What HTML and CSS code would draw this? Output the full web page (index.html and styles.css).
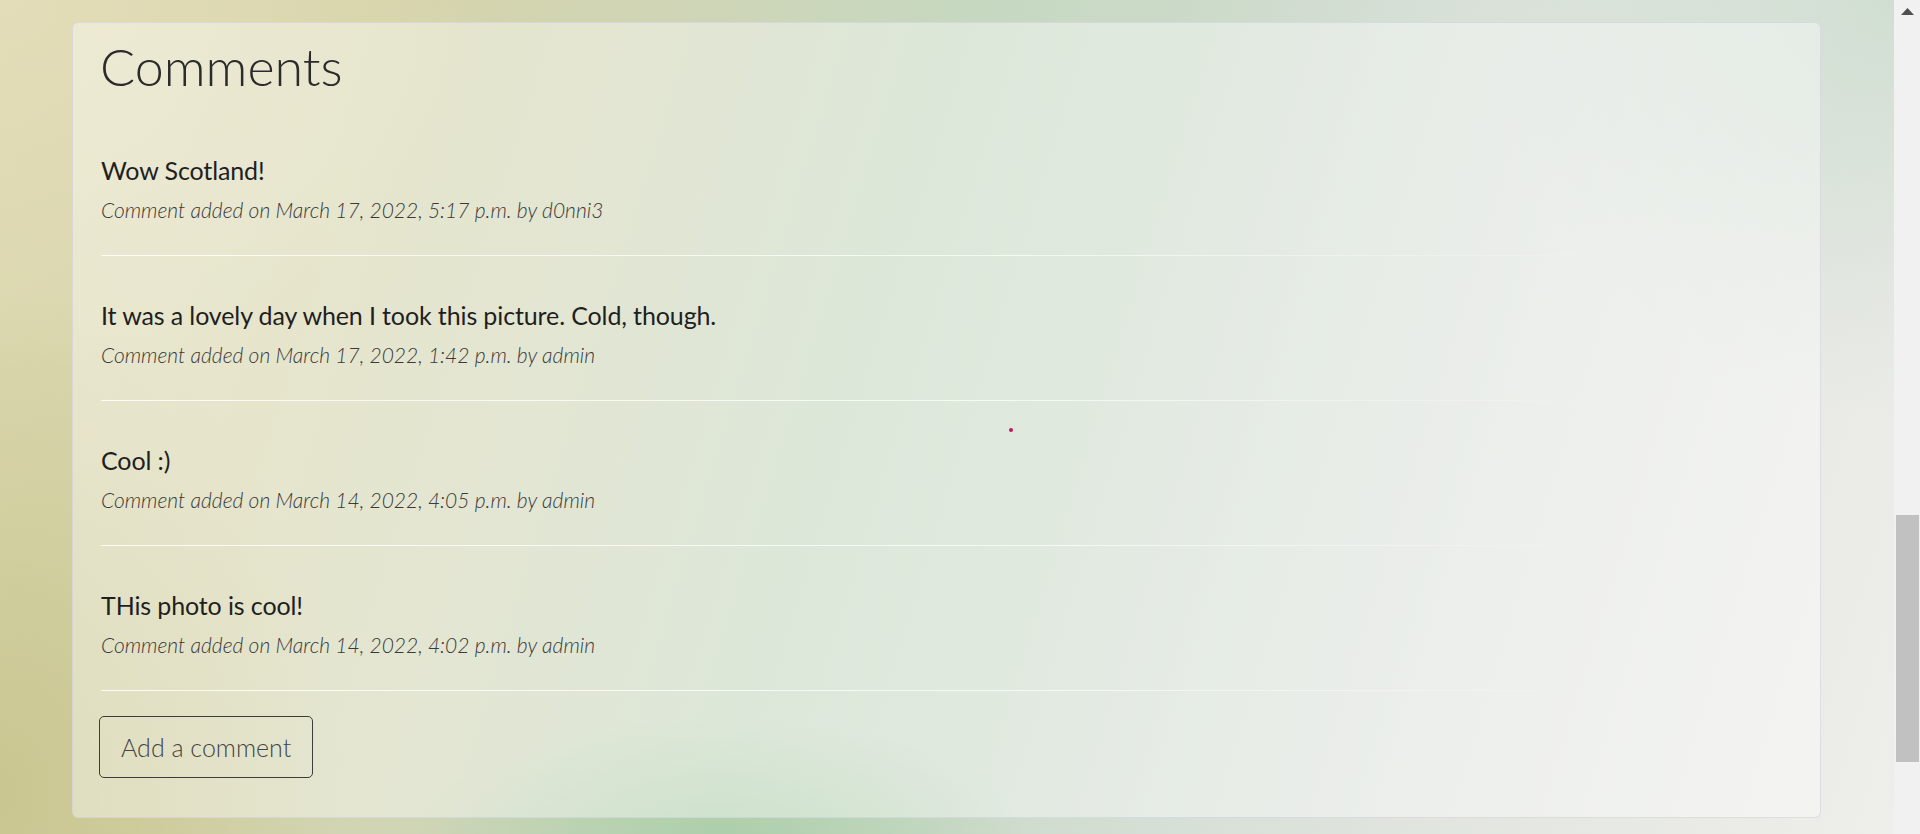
FILE: index.html
```html
<!DOCTYPE html>
<html lang="en">
<head>
<meta charset="utf-8">
<title>Comments</title>
<link rel="stylesheet" href="styles.css">
</head>
<body>
<div class="viewport">
  <main class="page">
    <section class="card">
      <h2 class="card-title">Comments</h2>
      <ul class="comment-list">
        <li class="comment">
          <p class="comment-body">Wow Scotland!</p>
          <p class="comment-meta">Comment added on March 17, 2022, 5:17 p.m. by d0nni3</p>
        </li>
        <li class="comment">
          <p class="comment-body">It was a lovely day when I took this picture. Cold, though.</p>
          <p class="comment-meta">Comment added on March 17, 2022, 1:42 p.m. by admin</p>
        </li>
        <li class="comment">
          <p class="comment-body">Cool :)</p>
          <p class="comment-meta">Comment added on March 14, 2022, 4:05 p.m. by admin</p>
        </li>
        <li class="comment">
          <p class="comment-body">THis photo is cool!</p>
          <p class="comment-meta">Comment added on March 14, 2022, 4:02 p.m. by admin</p>
        </li>
      </ul>
      <a class="btn-outline" href="#">Add a comment</a>
    </section>
    <span class="cursor-dot"></span>
  </main>
  <aside class="scrollbar">
    <div class="scroll-arrow">
      <svg width="13" height="7" viewBox="0 0 13 7"><polygon points="6.5,0 13,7 0,7" fill="#505050"/></svg>
    </div>
    <div class="scroll-thumb"></div>
  </aside>
</div>
</body>
</html>
```

FILE: styles.css
```css
* { box-sizing: border-box; }

html, body {
  margin: 0;
  padding: 0;
  height: 834px;
  overflow: hidden;
}

body {
  font-family: Lato, "Open Sans", sans-serif;
  color: #222;
}

.viewport {
  display: flex;
  height: 834px;
}

.page {
  position: relative;
  flex: 1;
  padding: 22px 73px 16px 72px;
  background:
    radial-gradient(ellipse 16% 14% at 38% 100%, rgba(170, 206, 168, 0.9), rgba(170, 206, 168, 0) 100%),
    radial-gradient(ellipse 18% 60% at 0% 95%, rgba(200, 197, 143, 0.95), rgba(200, 197, 143, 0) 100%),
    radial-gradient(ellipse 25% 45% at 0% 0%, rgba(228, 222, 186, 0.8), rgba(228, 222, 186, 0) 100%),
    radial-gradient(ellipse 22% 50% at 100% 0%, rgba(206, 221, 208, 0.9), rgba(206, 221, 208, 0) 100%),
    linear-gradient(107deg, #ddd8b0 0%, #d6d4ab 18%, #cfd5b6 32%, #c6d8c0 45%, #cbdac8 55%, #d6dfd6 66%, #e2e6e0 80%, #e9eae6 90%, #eeeeea 100%);
}

.card {
  background: rgba(255, 255, 255, 0.4);
  border: 1px solid rgba(205, 205, 220, 0.6);
  border-radius: 6px;
  padding: 12px 26px 39px 26px;
  height: 796px;
}

.card-title {
  margin: 0 0 14px 1px;
  font-size: 52px;
  font-weight: 300;
  line-height: 1.2;
  color: #2b2b2b;
}

.comment-list {
  list-style: none;
  margin: 0;
  padding: 0 0 0 2px;
}

.comment {
  padding: 44px 0 33px 0;
  border-style: solid;
  border-width: 0 0 1px 0;
  border-image: linear-gradient(90deg, rgba(255, 255, 255, 0.85) 0%, rgba(255, 255, 255, 0.7) 55%, rgba(255, 255, 255, 0.35) 75%, rgba(255, 255, 255, 0) 90%) 1;
}

.comment-body {
  margin: 0 0 13px 0;
  font-size: 25px;
  line-height: 30px;
  font-weight: 400;
  letter-spacing: -0.12px;
  color: #1f1f1f;
}

.comment-meta {
  margin: 0;
  font-size: 21px;
  line-height: 24px;
  font-weight: 300;
  font-style: italic;
  color: #3a3a3a;
}

.btn-outline {
  display: inline-block;
  margin-top: 25px;
  padding: 10px 21px;
  border: 1px solid #3c3c3c;
  border-radius: 5px;
  font-size: 25px;
  line-height: 40px;
  font-weight: 300;
  color: #444;
  text-decoration: none;
}

.cursor-dot {
  position: absolute;
  left: 1009px;
  top: 428px;
  width: 4px;
  height: 4px;
  border-radius: 50%;
  background: #c2185b;
}

.scrollbar {
  width: 26px;
  background: #f1f1f1;
  display: flex;
  flex-direction: column;
  padding: 0 1px 0 2px;
}

.scroll-arrow {
  height: 22px;
  display: flex;
  justify-content: center;
  padding-top: 8px;
}

.scroll-arrow svg { display: block; }

.scroll-thumb {
  margin-top: 493px;
  height: 247px;
  background: #c1c1c1;
}
```
